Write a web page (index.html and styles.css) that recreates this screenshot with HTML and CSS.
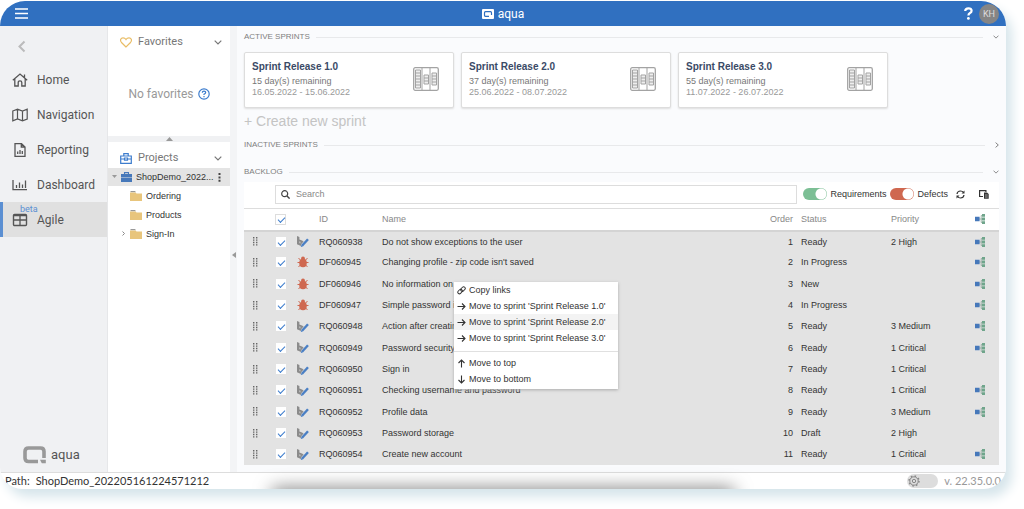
FILE: index.html
```html
<!DOCTYPE html>
<html lang="en">
<head>
<meta charset="utf-8">
<title>aqua</title>
<link rel="stylesheet" href="styles.css">
</head>
<body>
<svg class="sprites" aria-hidden="true">
  <symbol id="grip" viewBox="0 0 5 9"><path fill="#666" d="M0 0h1.400v1.400H0zM3 0h1.400v1.400H3zM0 2.400h1.400v1.400H0zM3 2.400h1.400v1.400H3zM0 4.800h1.400v1.400H0zM3 4.800h1.400v1.400H3zM0 7.200h1.400v1.400H0zM3 7.200h1.400v1.400H3z"/></symbol>
  <symbol id="req" viewBox="0 0 12 11"><path fill="#8b8b8b" d="M0 0l2.400 1v2.400l2.600 1 1.600 1.200-2.200 2.400L4 10 0 8.300z"/><path d="M2.400 5.200v1.800l1 .4V5.700z" fill="#d5d5d5"/><path d="M5 9.800l6-6.600" stroke="#4a7fc4" stroke-width="2.400"/><path d="M3.800 11l.4-2 1.600 1.400z" fill="#4a7fc4"/></symbol>
  <symbol id="bug" viewBox="0 0 12 12"><g stroke="#cf6850" stroke-width="1" fill="none"><path d="M1.500 2l2 2.200M10.500 2l-2 2.200M.5 6.500h11M1.500 11l2-2.200M10.500 11l-2-2.200"/></g><path fill="#cf6850" d="M4 3a2 2.400 0 0 1 4 0z"/><ellipse cx="6" cy="7" rx="3.800" ry="4.200" fill="#cf6850"/></symbol>
  <symbol id="tree" viewBox="0 0 10 10"><path d="M3 5h5M6.200 1.500v7M6.200 1.500H8M6.200 8.500H8" stroke="#8fa69c" stroke-width=".8" fill="none"/><path fill="#4678ba" d="M0 2.700h4.600v4.600H0z"/><path fill="#6fa58b" d="M7 0h3v2.800H7zM7 3.600h3v2.800H7zM7 7.200h3V10H7z"/></symbol>
  <symbol id="down" viewBox="0 0 8 5"><path d="M.7.7L4 4 7.300.7" fill="none" stroke="currentColor" stroke-width="1.200"/></symbol>
  <symbol id="board" viewBox="0 0 26 24"><g fill="none" stroke="#a3a3a3"><rect x=".7" y=".7" width="24.600" height="22.600" rx="1.500" stroke-width="1.300"/><path d="M9 .7v22.600M17 .7v22.600"/><path fill="#eee" d="M2.500 3h5v18h-5zM11 8h4.500v9H11zM19 6h4.500v12H19z"/><path d="M2.500 6h5m-5 3h5m-5 3h5m-5 3h5m-5 3h5M11 11h4.500M11 14h4.500M19 9h4.500M19 12h4.500M19 15h4.500"/></g></symbol>
  <symbol id="folder" viewBox="0 0 12 10"><path fill="#999" d="M.5 0h4.500l1 1.200H.5z"/><path fill="#e8c57c" d="M0 1.600h5.500l1 .8H12V10H0z"/></symbol>
  <symbol id="arrow" viewBox="0 0 9 9"><path d="M.5 4.500h7.500M5 1.500l3 3-3 3" fill="none" stroke="#333" stroke-width="1.100"/></symbol>
</svg>

<div class="window">
  <header class="topbar">
    <button class="plain" aria-label="Menu"><svg width="13" height="11" viewBox="0 0 13 11"><path d="M0 1h13M0 5.500h13M0 10h13" stroke="#fff" stroke-width="1.500"/></svg></button>
    <div class="brand"><svg width="12" height="10" viewBox="0 0 12 10"><rect width="12" height="10" rx="1" fill="#fff"/><path d="M7 7.300H3.500q-1 0-1-1V3.700q0-1 1-1h5q1 0 1 1V6" fill="none" stroke="#3070c0" stroke-width="1.200"/></svg>aqua</div>
    <div class="account">
      <button class="plain" aria-label="Help"><svg width="9" height="13" viewBox="0 0 9 13"><path d="M1.200 4Q1.200 1.300 4.400 1.300T7.600 3.800Q7.600 5.300 6 6.100T4.400 8.600" fill="none" stroke="#fff" stroke-width="2.200"/><circle cx="4.400" cy="11.400" r="1.400" fill="#fff"/></svg></button>
      <button class="avatar">KH</button>
    </div>
  </header>

  <div class="body">
    <nav class="nav">
      <button class="plain back" aria-label="Back"><svg width="8" height="13" viewBox="0 0 8 13"><path d="M6.500 1.500l-5 5 5 5" fill="none" stroke="#bbb" stroke-width="2"/></svg></button>
      <a href="#"><svg width="16" height="14" viewBox="0 0 16 14"><path d="M.8 7.200L8 1l7.200 6.200M2.800 6v7h3.400V9.500q0-1.700 1.800-1.700t1.800 1.700V13h3.400V6M12.500 4.500V1.500" fill="none" stroke="#555" stroke-width="1.300"/></svg>Home</a>
      <a href="#"><svg width="16" height="14" viewBox="0 0 16 14"><path d="M.8 3l4.700-1.800 5 1.800 4.700-1.800V11l-4.700 1.800-5-1.800L.8 12.800zM5.500 1.200V11M10.500 3v9.800" fill="none" stroke="#555" stroke-width="1.200"/></svg>Navigation</a>
      <a href="#"><svg width="16" height="14" viewBox="0 0 16 14"><path d="M3 .7h6.500L13 4v9.300H3zM9.300.7V4H13" fill="none" stroke="#555" stroke-width="1.300"/><path d="M5.700 11V8.500M8 11V7M10.300 11V8" stroke="#555" stroke-width="1.300"/></svg>Reporting</a>
      <a href="#"><svg width="16" height="14" viewBox="0 0 16 14"><path d="M1 2v9.700h14M4.500 10V7M7.500 10V4.500M10.500 10V6.500M13.500 10V2.500" fill="none" stroke="#555" stroke-width="1.300"/></svg>Dashboard</a>
      <a href="#" class="current"><svg width="16" height="14" viewBox="0 0 16 14"><rect x="1.500" y="1.500" width="13" height="11" rx="1" fill="none" stroke="#555" stroke-width="1.400"/><path d="M8 1.500v11M1.500 7h13M2 2.500h12" stroke="#555" stroke-width="1.300"/></svg>Agile<span class="beta">beta</span></a>
      <div class="logo"><svg width="23" height="18" viewBox="0 0 23 18"><path d="M15 15.500H5.500q-3.500 0-3.500-3.500V5.500Q2 2 5.500 2h12Q21 2 21 5.500V12" fill="none" stroke="#999" stroke-width="3.600"/><path d="M17 13.700h5.800v3.600h-4z" fill="#999"/></svg>aqua</div>
    </nav>

    <aside class="side">
      <section class="favorites">
        <h2><svg width="12" height="11" viewBox="0 0 12 11"><path d="M6 10L1.500 5.500C-.5 3 1 .8 3 .8 4.500.8 5.500 1.700 6 2.500 6.500 1.700 7.500.8 9 .8c2 0 3.500 2.200 1.500 4.700z" fill="none" stroke="#e9bd66" stroke-width="1.200"/></svg><span>Favorites</span><svg class="chev" width="8" height="5"><use href="#down"/></svg></h2>
        <p>No favorites <svg width="12" height="12" viewBox="0 0 12 12"><circle cx="6" cy="6" r="5.200" fill="none" stroke="#3c7ccd" stroke-width="1.200"/><path d="M4.300 4.700Q4.300 3.200 6 3.200t1.700 1.400Q7.700 5.500 6 6.200V7M6 8v1.200" fill="none" stroke="#3c7ccd" stroke-width="1.200"/></svg></p>
      </section>
      <div class="divider"><svg width="7" height="4" viewBox="0 0 7 4"><path d="M0 4L3.500 0 7 4z" fill="#999"/></svg></div>
      <section class="projects">
        <h2><svg width="12" height="11" viewBox="0 0 12 11"><path d="M.7 3h10.600v7.300H.7zM3.800 3V.7h4.400V3M.7 6h3.500M7.800 6h3.500M4.500 5h3v2.200h-3z" fill="none" stroke="#3c7ccd" stroke-width="1.200"/></svg><span>Projects</span><svg class="chev" width="8" height="5"><use href="#down"/></svg></h2>
        <ul>
          <li class="root"><svg width="5" height="4" viewBox="0 0 5 4"><path d="M0 0h5L2.500 3z" fill="#999"/></svg><svg width="11" height="10" viewBox="0 0 11 10"><path d="M3.500 2V.6h4V2" fill="none" stroke="#4678ba" stroke-width="1.100"/><path d="M0 2h11v3H0zM0 5.600h11V10H0z" fill="#4678ba"/></svg><span>ShopDemo_2022...</span><svg class="more" width="3" height="9" viewBox="0 0 3 9"><path fill="#444" d="M.5 0h2v2h-2zM.5 3.400h2v2h-2zM.5 6.800h2v2h-2z"/></svg></li>
          <li><svg width="5" height="7"></svg><svg width="12" height="10"><use href="#folder"/></svg>Ordering</li>
          <li><svg width="5" height="7"></svg><svg width="12" height="10"><use href="#folder"/></svg>Products</li>
          <li><svg width="5" height="7" viewBox="0 0 5 7"><path d="M1.500 1.500l2 2-2 2" fill="none" stroke="#888"/></svg><svg width="12" height="10"><use href="#folder"/></svg>Sign-In</li>
        </ul>
      </section>
    </aside>
    <div class="splitter"><svg width="4" height="6" viewBox="0 0 4 6"><path d="M4 0v6L0 3z" fill="#999"/></svg></div>

    <main class="main">
      <h2 class="heading">ACTIVE SPRINTS<svg width="6" height="4"><use href="#down"/></svg></h2>
      <div class="cards">
        <article><div><h3>Sprint Release 1.0</h3><p>15 day(s) remaining</p><p class="dates">16.05.2022 - 15.06.2022</p></div><svg width="26" height="24"><use href="#board"/></svg></article>
        <article><div><h3>Sprint Release 2.0</h3><p>37 day(s) remaining</p><p class="dates">25.06.2022 - 08.07.2022</p></div><svg width="26" height="24"><use href="#board"/></svg></article>
        <article><div><h3>Sprint Release 3.0</h3><p>55 day(s) remaining</p><p class="dates">11.07.2022 - 26.07.2022</p></div><svg width="26" height="24"><use href="#board"/></svg></article>
      </div>
      <button class="plain create">+ Create new sprint</button>
      <h2 class="heading inactive">INACTIVE SPRINTS<svg width="4" height="6" viewBox="0 0 4 6"><path d="M.6.6L3.300 3 .6 5.400" fill="none" stroke="currentColor"/></svg></h2>
      <h2 class="heading backlog">BACKLOG<svg width="6" height="4"><use href="#down"/></svg></h2>

      <div class="grid">
        <div class="toolbar">
          <label class="search"><svg width="9" height="9" viewBox="0 0 9 9"><circle cx="3.700" cy="3.700" r="3" fill="none" stroke="#444" stroke-width="1.200"/><path d="M6 6l2.600 2.600" stroke="#444" stroke-width="1.400"/></svg><input type="text" placeholder="Search" aria-label="Search"></label>
          <label class="switch"><input type="checkbox" checked>Requirements</label>
          <label class="switch red"><input type="checkbox" checked>Defects</label>
          <button class="plain" aria-label="Refresh"><svg width="9" height="9" viewBox="0 0 9 9"><path d="M1 4Q1.400 1 4.500 1 6.500 1 7.500 2.500M8 5Q7.600 8 4.500 8 2.500 8 1.500 6.500" fill="none" stroke="#333" stroke-width="1.200"/><path d="M8.500.5v3h-3zM.5 8.500v-3h3z" fill="#333"/></svg></button>
          <button class="plain copy" aria-label="Columns"><svg width="10" height="9" viewBox="0 0 10 9"><path d="M4 6.500H.6V.6h6.300V2" fill="none" stroke="#333" stroke-width="1.200"/><path d="M5 2.500h3L9.700 4v4.800H5z" fill="#333"/><path d="M6 5h2.700M6 7h2.700" stroke="#ccc" stroke-width=".7"/></svg></button>
        </div>
        <table>
          <colgroup><col class="c-grip"><col class="c-check"><col class="c-type"><col class="c-id"><col><col class="c-order"><col class="c-status"><col class="c-priority"><col class="c-tree"></colgroup>
          <thead><tr><th></th><th class="mid"><input type="checkbox" checked aria-label="Select all"></th><th></th><th>ID</th><th>Name</th><th class="num">Order</th><th class="status">Status</th><th>Priority</th><th class="mid"><svg width="10" height="10"><use href="#tree"/></svg></th></tr></thead>
          <tbody>
            <tr><td class="mid"><svg width="5" height="9"><use href="#grip"/></svg></td><td class="mid"><input type="checkbox" checked aria-label="RQ060938"></td><td class="type"><svg width="12" height="11"><use href="#req"/></svg></td><td>RQ060938</td><td>Do not show exceptions to the user</td><td class="num">1</td><td class="status">Ready</td><td>2 High</td><td class="mid"><svg width="10" height="10"><use href="#tree"/></svg></td></tr>
            <tr><td class="mid"><svg width="5" height="9"><use href="#grip"/></svg></td><td class="mid"><input type="checkbox" checked aria-label="DF060945"></td><td class="type"><svg width="12" height="12"><use href="#bug"/></svg></td><td>DF060945</td><td>Changing profile - zip code isn't saved</td><td class="num">2</td><td class="status">In Progress</td><td></td><td class="mid"><svg width="10" height="10"><use href="#tree"/></svg></td></tr>
            <tr><td class="mid"><svg width="5" height="9"><use href="#grip"/></svg></td><td class="mid"><input type="checkbox" checked aria-label="DF060946"></td><td class="type"><svg width="12" height="12"><use href="#bug"/></svg></td><td>DF060946</td><td>No information on w</td><td class="num">3</td><td class="status">New</td><td></td><td class="mid"><svg width="10" height="10"><use href="#tree"/></svg></td></tr>
            <tr><td class="mid"><svg width="5" height="9"><use href="#grip"/></svg></td><td class="mid"><input type="checkbox" checked aria-label="DF060947"></td><td class="type"><svg width="12" height="12"><use href="#bug"/></svg></td><td>DF060947</td><td>Simple password is</td><td class="num">4</td><td class="status">In Progress</td><td></td><td class="mid"><svg width="10" height="10"><use href="#tree"/></svg></td></tr>
            <tr><td class="mid"><svg width="5" height="9"><use href="#grip"/></svg></td><td class="mid"><input type="checkbox" checked aria-label="RQ060948"></td><td class="type"><svg width="12" height="11"><use href="#req"/></svg></td><td>RQ060948</td><td>Action after creating</td><td class="num">5</td><td class="status">Ready</td><td>3 Medium</td><td class="mid"><svg width="10" height="10"><use href="#tree"/></svg></td></tr>
            <tr><td class="mid"><svg width="5" height="9"><use href="#grip"/></svg></td><td class="mid"><input type="checkbox" checked aria-label="RQ060949"></td><td class="type"><svg width="12" height="11"><use href="#req"/></svg></td><td>RQ060949</td><td>Password security r</td><td class="num">6</td><td class="status">Ready</td><td>1 Critical</td><td class="mid"><svg width="10" height="10"><use href="#tree"/></svg></td></tr>
            <tr><td class="mid"><svg width="5" height="9"><use href="#grip"/></svg></td><td class="mid"><input type="checkbox" checked aria-label="RQ060950"></td><td class="type"><svg width="12" height="11"><use href="#req"/></svg></td><td>RQ060950</td><td>Sign in</td><td class="num">7</td><td class="status">Ready</td><td>1 Critical</td><td></td></tr>
            <tr><td class="mid"><svg width="5" height="9"><use href="#grip"/></svg></td><td class="mid"><input type="checkbox" checked aria-label="RQ060951"></td><td class="type"><svg width="12" height="11"><use href="#req"/></svg></td><td>RQ060951</td><td>Checking username and password</td><td class="num">8</td><td class="status">Ready</td><td>1 Critical</td><td class="mid"><svg width="10" height="10"><use href="#tree"/></svg></td></tr>
            <tr><td class="mid"><svg width="5" height="9"><use href="#grip"/></svg></td><td class="mid"><input type="checkbox" checked aria-label="RQ060952"></td><td class="type"><svg width="12" height="11"><use href="#req"/></svg></td><td>RQ060952</td><td>Profile data</td><td class="num">9</td><td class="status">Ready</td><td>3 Medium</td><td class="mid"><svg width="10" height="10"><use href="#tree"/></svg></td></tr>
            <tr><td class="mid"><svg width="5" height="9"><use href="#grip"/></svg></td><td class="mid"><input type="checkbox" checked aria-label="RQ060953"></td><td class="type"><svg width="12" height="11"><use href="#req"/></svg></td><td>RQ060953</td><td>Password storage</td><td class="num">10</td><td class="status">Draft</td><td>2 High</td><td></td></tr>
            <tr><td class="mid"><svg width="5" height="9"><use href="#grip"/></svg></td><td class="mid"><input type="checkbox" checked aria-label="RQ060954"></td><td class="type"><svg width="12" height="11"><use href="#req"/></svg></td><td>RQ060954</td><td>Create new account</td><td class="num">11</td><td class="status">Ready</td><td>1 Critical</td><td class="mid"><svg width="10" height="10"><use href="#tree"/></svg></td></tr>
          </tbody>
        </table>
        <div class="menu" role="menu">
          <button role="menuitem"><svg width="9" height="9" viewBox="0 0 9 9"><g fill="none" stroke="#333" stroke-width="1"><rect x="-.4" y="-1.600" width="5" height="3.200" rx="1.600" transform="translate(1.600 7) rotate(-45)"/><rect x="-.4" y="-1.600" width="5" height="3.200" rx="1.600" transform="translate(4.500 4.500) rotate(-45)"/></g></svg>Copy links</button>
          <button role="menuitem"><svg width="9" height="9"><use href="#arrow"/></svg>Move to sprint 'Sprint Release 1.0'</button>
          <button role="menuitem" class="hover"><svg width="9" height="9"><use href="#arrow"/></svg>Move to sprint 'Sprint Release 2.0'</button>
          <button role="menuitem"><svg width="9" height="9"><use href="#arrow"/></svg>Move to sprint 'Sprint Release 3.0'</button>
          <hr>
          <button role="menuitem"><svg width="9" height="9" viewBox="0 0 9 9"><path d="M4.500 8.500V1M1.500 4l3-3 3 3" fill="none" stroke="#333" stroke-width="1.100"/></svg>Move to top</button>
          <button role="menuitem"><svg width="9" height="9" viewBox="0 0 9 9"><path d="M4.500.5V8M1.500 5l3 3 3-3" fill="none" stroke="#333" stroke-width="1.100"/></svg>Move to bottom</button>
        </div>
      </div>
    </main>
  </div>

  <footer class="footer">
    <span>Path:</span><span>ShopDemo_202205161224571212</span>
    <label class="gear"><input type="checkbox" aria-label="Settings mode"><svg width="12" height="12" viewBox="0 0 12 12"><g fill="none" stroke="#888"><circle cx="6" cy="6" r="5" stroke-width="1.400" stroke-dasharray="1.600 2.327"/><circle cx="6" cy="6" r="4.200"/><circle cx="6" cy="6" r="1.700"/></g></svg></label>
    <span class="version">v. 22.35.0.0</span>
  </footer>
</div>
</body>
</html>
```

FILE: styles.css
```css
* { box-sizing: border-box; }
body {
  margin: 0;
  background: #fff;
  color: #333;
  font: 9px/12px "Liberation Sans", Arial, sans-serif;
}
h2, h3, p, ul { margin: 0; padding: 0; font-weight: 400; }
ul { list-style: none; }
svg { display: block; flex: none; }
button, input { font: inherit; color: inherit; margin: 0; }
.sprites { position: absolute; width: 0; height: 0; }
.plain { display: block; border: 0; padding: 0; background: none; }

.window {
  display: flex;
  flex-direction: column;
  min-height: calc(100vh - 21px);
  margin: 1px 18px 20px 0;
  border-radius: 25px 25px 22px 22px;
  overflow: hidden;
  background: #fff;
  box-shadow: 6px 8px 12px #d6e5eb;
}

.topbar {
  display: grid;
  grid-template-columns: 1fr auto 1fr;
  align-items: center;
  height: 25px;
  padding: 0 7px;
  background: #3070c0;
  color: #fff;
}
.topbar > .plain { padding-left: 8px; }
.brand { display: flex; align-items: center; gap: 4px; font: 12px/16px Roboto, sans-serif; }
.account { display: flex; align-items: center; justify-content: flex-end; gap: 6px; }
.avatar {
  width: 20px; height: 20px; padding: 0;
  border: 0; border-radius: 50%;
  background: #858585; color: #ddd;
  font: 9px/20px Roboto, sans-serif;
}

.body { display: flex; flex: 1; }

.nav {
  display: flex;
  flex-direction: column;
  width: 108px;
  background: #f0f1f3;
  font: 12px/18px Roboto, sans-serif;
  color: #555;
  border-right: 1px solid #e6e7e9;
}
.back { padding: 14px 18px 9px; }
.nav a {
  position: relative;
  display: flex;
  align-items: center;
  gap: 9px;
  height: 35px;
  padding-left: 12px;
  color: inherit;
  text-decoration: none;
}
.nav .current { background: #e0e0e0; box-shadow: inset 3px 0 #5b8fd2; }
.beta { position: absolute; left: 20px; top: 1px; font-size: 9px; line-height: 12px; color: #5b8fd2; }
.logo { display: flex; align-items: center; gap: 5px; margin: auto 0 8px 23px; font-size: 13px; }

.side { display: flex; flex-direction: column; width: 122px; color: #777; }
.side h2 {
  display: flex;
  align-items: center;
  gap: 6px;
  padding: 0 8px 0 12px;
  font: 11px/16px Roboto, sans-serif;
}
.chev { margin-left: auto; }
.favorites { height: 110px; padding-top: 8px; }
.favorites p {
  display: flex; align-items: center; justify-content: center; gap: 4px;
  margin-top: 35px;
  font: 12px/18px Roboto, sans-serif;
  color: #999;
}
.divider { display: flex; justify-content: center; align-items: center; height: 6px; background: #f0f1f3; }
.projects { flex: 1; padding-top: 8px; }
.projects ul { margin-top: 2px; }
.projects li { display: flex; align-items: center; gap: 4px; height: 19px; padding-left: 13px; color: #333; }
.projects .root { padding-left: 4px; height: 18px; background: #e4e4e4; }
.more { margin: 0 14px 0 auto; }
.splitter { display: flex; align-items: center; width: 7px; padding: 12px 0 0 2px; background: #f3f4f6; }

.main { flex: 1; padding: 5px 7px 6px; background: #fafbfd; }
.heading {
  display: flex;
  align-items: center;
  font-size: 8px;
  line-height: 12px;
  color: #808080;
}
.heading::after { content: ""; order: 1; flex: 1; height: 1px; margin: 0 10px 0 6px; background: #e8e9eb; }
.heading svg { order: 2; }
.inactive { margin-top: 10px; }
.backlog { margin-top: 15px; }
.cards { display: flex; gap: 7px; margin-top: 9px; }
.cards article {
  display: flex;
  align-items: center;
  justify-content: space-between;
  width: 210px;
  height: 56px;
  padding: 0 14px 2px 7px;
  border: 1px solid #ddd;
  border-radius: 2px;
  background: #fff;
  box-shadow: 0 1px 2px #ddd;
  color: #777;
}
.cards h3 { font-size: 10px; line-height: 14px; font-weight: 700; color: #3a4a66; margin-bottom: 2px; }
.cards p { line-height: 11px; }
.cards .dates { color: #999; }
.create { margin-top: 5px; font-size: 14px; line-height: 16px; color: #c4c4c4; }

.grid { position: relative; margin-top: 4px; background: #fff; }
.toolbar { display: flex; align-items: center; height: 26px; padding: 0 10px 2px 31px; }
.search {
  display: flex;
  align-items: center;
  gap: 6px;
  flex: 1;
  height: 19px;
  margin-right: 6px;
  padding-left: 5px;
  border: 1px solid #ddd;
}
.search input { flex: 1; min-width: 0; border: 0; padding: 0; outline: 0; background: none; }
.search input::placeholder { color: #888; opacity: 1; }
.switch { display: flex; align-items: center; gap: 3px; margin-right: 4px; }
.switch input {
  appearance: none;
  width: 24px; height: 12px;
  border-radius: 6px;
  background: radial-gradient(circle at 18px 6px, #fff 5px, transparent 6px) #7cbf95;
}
.red { margin-right: 8px; }
.red input { background-color: #cf6850; }
.copy { margin-left: 14px; }

table { width: 100%; table-layout: fixed; border-collapse: collapse; }
.c-grip { width: 22px; }
.c-check { width: 29px; }
.c-type { width: 24px; }
.c-id { width: 63px; }
.c-order { width: 48px; }
.c-status { width: 98px; }
.c-priority { width: 70px; }
.c-tree { width: 38px; }
th, td { padding: 0; text-align: left; font-weight: 400; white-space: nowrap; }
thead tr { height: 22px; border-top: 1px solid #ddd; border-bottom: 2px solid #d4d4d4; color: #888; }
tbody { background: #e3e3e3; }
tbody tr { height: 21px; }
tbody tr:nth-child(3n) { height: 22px; }
.mid svg, .mid input { margin: 0 auto; }
.num { text-align: right; }
.status { padding-left: 8px; }
.type { padding-left: 2px; }
td input, th input {
  appearance: none;
  display: block;
  width: 10px; height: 10px;
  background: #fff;
  position: relative;
}
th input { border: 1px solid #ddd; width: 11px; height: 11px; }
td input::after, th input::after {
  content: "";
  position: absolute;
  left: 2px; top: 3px;
  width: 6px; height: 3px;
  border: solid #3c7ccd;
  border-width: 0 0 1px 1px;
  transform: rotate(-45deg);
}
th input::after { top: 2px; }

.menu {
  position: absolute;
  left: 210px; top: 100px;
  width: 164px;
  padding-bottom: 2px;
  background: #fff;
  box-shadow: 0 1px 3px #aaa;
}
.menu button {
  display: flex;
  align-items: center;
  gap: 3px;
  width: 100%;
  height: 16px;
  padding: 0 3px;
  border: 0;
  background: none;
  white-space: nowrap;
}
.menu .hover { background: #f3f3f3; }
.menu hr { height: 1px; margin: 5px 0 3px; border: 0; background: #e0e0e0; }

.footer {
  position: relative;
  display: flex;
  align-items: center;
  gap: 6px;
  height: 17px;
  padding: 0 5px;
  border-top: 1px solid #ddd;
  font: 11px/16px Lato, sans-serif;
}
.footer::after {
  content: "";
  position: absolute;
  top: 100%; left: 27%; right: 27%;
  height: 12px;
  box-shadow: 0 0 18px #666;
}
.gear { display: flex; align-items: center; width: 31px; height: 14px; margin-left: auto; padding-left: 1px; border-radius: 7px; background: #ddd; }
.gear input { appearance: none; width: 0; height: 0; }
.version { color: #999; }
```
